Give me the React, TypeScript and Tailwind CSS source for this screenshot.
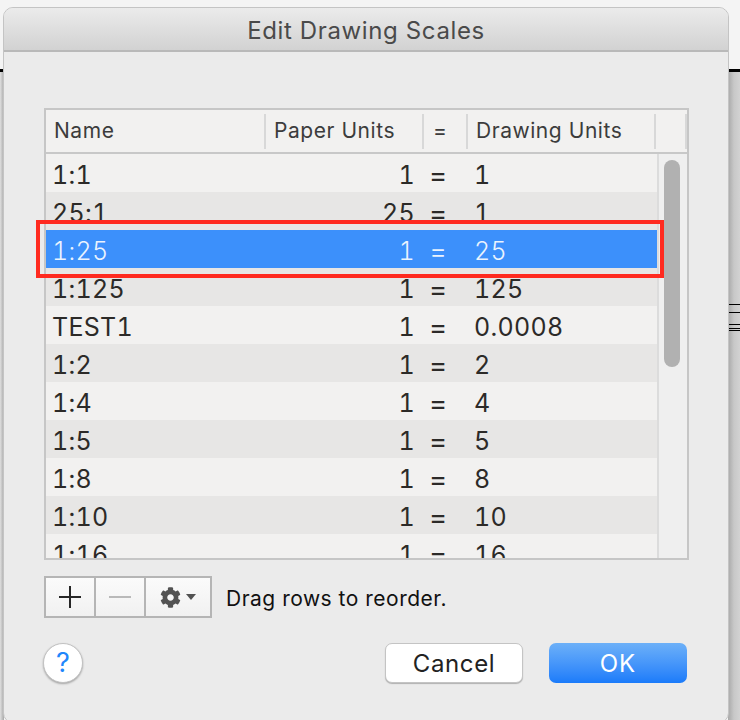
import React from "react";
import { FaCog } from "react-icons/fa";

const rows = [
  { name: "1:1", paper: "1", drawing: "1" },
  { name: "25:1", paper: "25", drawing: "1" },
  { name: "1:25", paper: "1", drawing: "25", selected: true },
  { name: "1:125", paper: "1", drawing: "125" },
  { name: "TEST1", paper: "1", drawing: "0.0008" },
  { name: "1:2", paper: "1", drawing: "2" },
  { name: "1:4", paper: "1", drawing: "4" },
  { name: "1:5", paper: "1", drawing: "5" },
  { name: "1:8", paper: "1", drawing: "8" },
  { name: "1:10", paper: "1", drawing: "10" },
  { name: "1:16", paper: "1", drawing: "16" },
];

function ScaleRow({ row, index }: { row: (typeof rows)[number]; index: number }) {
  const zebra = index % 2 === 0 ? "bg-[#f2f1f0]" : "bg-[#e7e6e5]";
  return (
    <div className={`h-[38px] shrink-0 ${row.selected ? "bg-[#ebebeb]" : zebra}`}>
      <div
        className={`grid h-[38px] grid-cols-[219px_150px_59px_1fr] pt-[4px] text-[25px] leading-[34px] tabular-nums tracking-[0.3px] ${
          row.selected ? "bg-[#3c90fb] font-light text-[#eaf3fe]" : "text-[#2c2a28]"
        }`}
      >
        <span className="pl-[6px]">{row.name}</span>
        <span className="text-right">{row.paper}</span>
        <span className="pl-[14px] text-[28px]">=</span>
        <span>{row.drawing}</span>
      </div>
    </div>
  );
}

function HeaderCell({ label, width, divider = true }: { label: string; width: string; divider?: boolean }) {
  return (
    <div className={`flex h-[35px] items-center ${width} ${divider ? "border-r-2 border-[#d8d8d8]" : ""}`}>
      <span>{label}</span>
    </div>
  );
}

export default function App() {
  return (
    <div
      className="relative h-[720px] w-[740px] overflow-hidden bg-[#f4f4f4]"
      style={{ fontFamily: "Inter, 'Liberation Sans', sans-serif" }}
    >
      {/* drawing behind the dialog */}
      <div className="absolute left-0 top-[69px] h-[3px] w-[740px] bg-black" />
      <div className="absolute bottom-0 left-0 top-[72px] w-[4px] bg-gradient-to-r from-[#e0e0e0] to-[#a8a8a8]" />
      <div className="absolute bottom-0 right-0 top-[72px] w-[12px] bg-gradient-to-r from-[#a8a8a8] via-[#c8c8c8] to-[#d2d2d2]" />
      <div className="absolute left-[729px] top-[304px] flex h-[34px] w-[11px] flex-col">
        <div className="h-px bg-black" />
        <div className="mt-[7px] h-px bg-black" />
        <div className="mt-[11px] h-px bg-black" />
        <div className="mt-[3px] h-px bg-black" />
        <div className="mt-[1px] h-px bg-black" />
      </div>

      <div className="relative ml-[3px] mt-[7px] h-[716px] w-[726px] overflow-hidden rounded-[10px] border border-[#c4c4c4] bg-[#ebebeb]">
        <div className="flex h-[44px] items-center justify-center border-b-2 border-[#b9b9b9] bg-gradient-to-b from-[#ebebeb] to-[#d2d2d2] pt-[3px] text-[24px] tracking-[0.63px] text-[#4a4a4a]">
          Edit Drawing Scales
        </div>

        <div className="ml-[40px] mt-[56px] flex h-[452px] w-[645px] flex-col border-2 border-[#c6c6c6] bg-[#f2f1f0]">
          <div className="flex h-[44px] shrink-0 items-center border-b-2 border-[#c8c8c8] text-[21px] tracking-[0.55px] text-[#3c3c3c]">
            <HeaderCell label="Name" width="w-[220px] pl-2" />
            <HeaderCell label="Paper Units" width="w-[158px] pl-2" />
            <HeaderCell label="=" width="w-[44px] pl-[9px]" />
            <HeaderCell label="Drawing Units" width="w-[188px] pl-2" />
            <div className="h-[35px] w-[31px] border-r-2 border-[#d8d8d8]" />
          </div>
          <div className="flex min-h-0 flex-1">
            <div className="flex w-[611px] flex-col overflow-hidden">
              {rows.map((row, i) => (
                <ScaleRow key={row.name} row={row} index={i} />
              ))}
            </div>
            <div className="w-[30px] border-l-2 border-[#dcdcdc] bg-[#efefef] pl-[5px] pt-[6px]">
              <div className="h-[207px] w-[16px] rounded-full bg-[#b1b1b1]" />
            </div>
          </div>
        </div>

        <div className="ml-[40px] mt-[16px] flex items-center">
          <div className="flex h-[42px] w-[168px] border-2 border-[#b5b5b5] bg-gradient-to-b from-[#fbfbfb] to-[#f1f1f1]">
            <div className="flex w-[50px] items-center justify-center border-r-2 border-[#b5b5b5]">
              <svg width="24" height="24" viewBox="0 0 24 24">
                <path d="M12 1v22M1 12h22" stroke="#262626" strokeWidth="2" />
              </svg>
            </div>
            <div className="flex w-[50px] items-center justify-center border-r-2 border-[#b5b5b5]">
              <svg width="24" height="24" viewBox="0 0 24 24">
                <path d="M1 12h22" stroke="#b9b9b9" strokeWidth="2" />
              </svg>
            </div>
            <div className="flex flex-1 items-center justify-center gap-[5px]">
              <FaCog className="text-[21px] text-[#525252]" />
              <svg width="10" height="6" viewBox="0 0 10 6">
                <path d="M0 0h10L5 6z" fill="#525252" />
              </svg>
            </div>
          </div>
          <span className="ml-[14px] pt-[3px] text-[21px] tracking-[0.5px] text-[#111111]">Drag rows to reorder.</span>
        </div>

        <div className="ml-[39px] mt-[25px] flex items-center">
          <div className="flex h-[40px] w-[40px] items-center justify-center rounded-full border border-[#c2c2c2] bg-white text-[27px] text-[#1f87fb] shadow-[0_1px_2px_rgba(0,0,0,0.3)]">
            ?
          </div>
          <button className="ml-[302px] h-[40px] w-[138px] rounded-[7px] border border-[#c4c4c4] bg-white pt-[2px] text-[24px] tracking-[0.6px] text-[#222222] shadow-[0_1px_1px_rgba(0,0,0,0.25)]">
            Cancel
          </button>
          <button className="ml-[26px] h-[40px] w-[138px] rounded-[7px] bg-gradient-to-b from-[#6cb0f8] to-[#1a7bfa] pt-[2px] text-[24px] tracking-[1px] text-white">
            OK
          </button>
        </div>
      </div>

      {/* highlight drawn over the screenshot */}
      <div className="absolute left-[36px] top-[220px] h-[58px] w-[628px] border-4 border-[#ff2a1f]" />
    </div>
  );
}
